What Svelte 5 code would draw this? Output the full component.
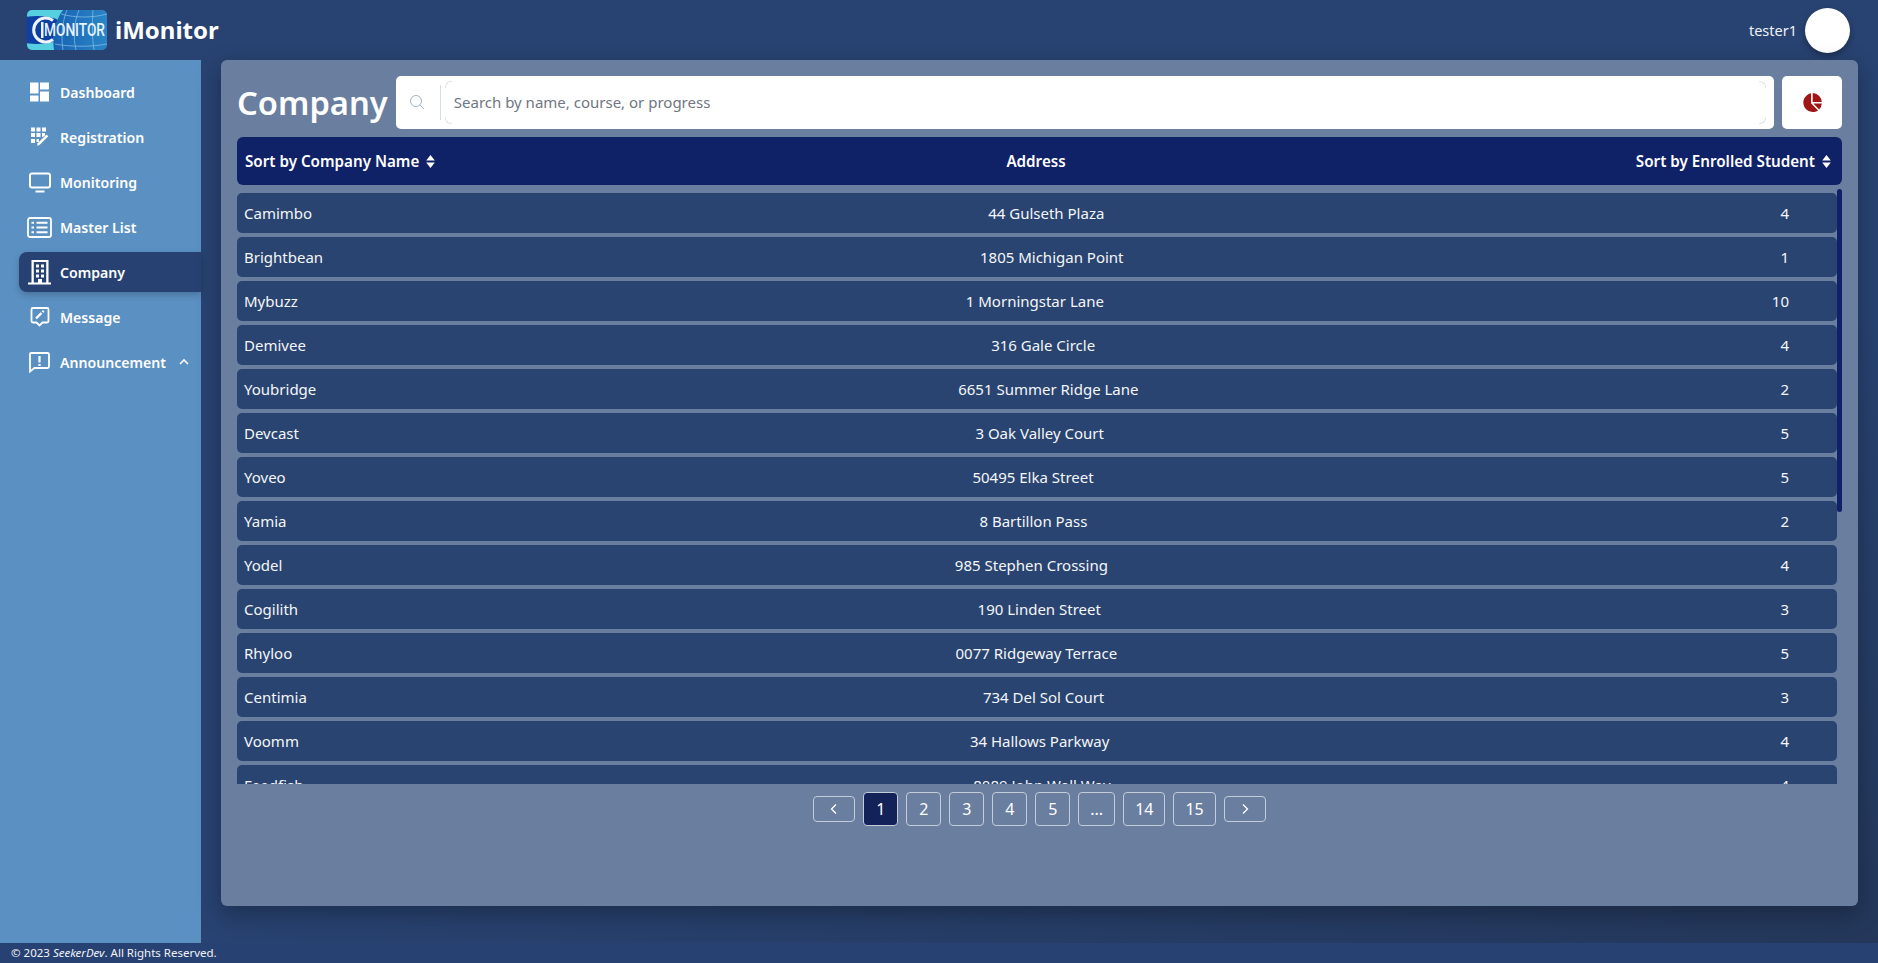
<script>
  const nav = [
    { label: 'Dashboard', icon: 'dashboard' },
    { label: 'Registration', icon: 'registration' },
    { label: 'Monitoring', icon: 'monitor' },
    { label: 'Master List', icon: 'list' },
    { label: 'Company', icon: 'company', active: true },
    { label: 'Message', icon: 'message' },
    { label: 'Announcement', icon: 'announce', caret: true }
  ];

  const companies = [
    ['Camimbo', '44 Gulseth Plaza', 4],
    ['Brightbean', '1805 Michigan Point', 1],
    ['Mybuzz', '1 Morningstar Lane', 10],
    ['Demivee', '316 Gale Circle', 4],
    ['Youbridge', '6651 Summer Ridge Lane', 2],
    ['Devcast', '3 Oak Valley Court', 5],
    ['Yoveo', '50495 Elka Street', 5],
    ['Yamia', '8 Bartillon Pass', 2],
    ['Yodel', '985 Stephen Crossing', 4],
    ['Cogilith', '190 Linden Street', 3],
    ['Rhyloo', '0077 Ridgeway Terrace', 5],
    ['Centimia', '734 Del Sol Court', 3],
    ['Voomm', '34 Hallows Parkway', 4],
    ['Feedfish', '8089 John Wall Way', 4]
  ];

  const pages = ['1', '2', '3', '4', '5', '...', '14', '15'];
</script>

<div class="page">
  <header class="topbar">
    <div class="brand">
      <div class="logo">
        <svg class="globe" viewBox="0 0 80 40" fill="none">
          <defs>
            <linearGradient id="sky" x1="0" y1="0" x2="1" y2="0">
              <stop offset="0" stop-color="#0f4fa6" />
              <stop offset="1" stop-color="#2a86c8" />
            </linearGradient>
            <clipPath id="leftpart">
              <path d="M0 0h36C28 10 25 28 27 40H0z" />
            </clipPath>
          </defs>
          <rect width="80" height="40" fill="url(#sky)" />
          <path d="M0 0h36C28 10 25 28 27 40H0z" fill="#56cfe0" />
          <ellipse cx="10" cy="20" rx="30" ry="14" fill="#0e3fa3" clip-path="url(#leftpart)" />
          <path d="M34 4c14 4 32 4 46 0M28 34c16 3 36 3 52 0M52 0c-5 12-6 28-3 40M66 0c-1 14-1 28 1 40M40 0c-5 12-6 28-4 40" stroke="#8cc3ea" stroke-width=".7" />
          <path d="M26 10.500A12 12 0 1 0 26 29.500" stroke="#eef4fa" stroke-width="3" />
          <rect x="14" y="12" width="2.500" height="16" fill="#eef4fa" />
        </svg>
        <span class="logo-text">MONITOR</span>
      </div>
      <span class="brand-name">iMonitor</span>
    </div>
    <div class="user">
      <span>tester1</span>
      <div class="avatar"></div>
    </div>
  </header>

  <div class="middle">
    <aside class="sidebar">
      {#each nav as item}
        <div class="nav-item" class:active={item.active}>
          <svg class="nav-icon" viewBox="0 0 24 24" fill="currentColor">
            {#if item.icon === 'dashboard'}
              <path d="M2 2.500h8.500v11H2zM12 2.500h9v7h-9zM12 11.500h9v10h-9zM2 15.500h8.500v6H2z" />
            {:else if item.icon === 'registration'}
              <path d="M3 2.500h4v4H3zM8.500 2.500h4v4h-4zM14 2.500h4v4h-4zM3 8h4v4H3zM8.500 8h4v4h-4zM14 8h3v2.500L14.500 12H14zM3 14h4v4H3zM8.500 14h2.500v3H8.500z" />
              <path d="M18.500 9.500l1.800 1.800-8.800 8.700-2.500.7.700-2.500z" />
            {:else if item.icon === 'monitor'}
              <g fill="none" stroke="currentColor" stroke-width="2">
                <rect x="2" y="3.500" width="20" height="14" rx="2" />
                <path d="M7.500 21.500h9" />
              </g>
            {:else if item.icon === 'list'}
              <g fill="none" stroke="currentColor">
                <rect x="0" y="3" width="23" height="19" rx="2" stroke-width="1.800" />
                <path d="M8.500 7.800h11M8.500 12.500h11M8.500 17.200h11" stroke-width="2" />
                <path d="M3.500 7.800h2.500M3.500 12.500h2.500M3.500 17.200h2.500" stroke-width="2" />
              </g>
            {:else if item.icon === 'company'}
              <path fill-rule="evenodd" d="M3.500 0h17v22.500H23v2H0v-2h3.500zM5.800 2v20.500h4.200v-3.500h4v3.500h4.200V2zM8 4.500h3v3H8zM13 4.500h3v3h-3zM8 9.500h3v3H8zM13 9.500h3v3h-3zM8 14.500h3v3H8zM13 14.500h3v3h-3z" />
            {:else if item.icon === 'message'}
              <g fill="none" stroke="currentColor" stroke-width="1.800">
                <path d="M5 3h14a1.500 1.500 0 0 1 1.500 1.500v11.500a1.500 1.500 0 0 1-1.500 1.500h-4.500l-3 3-3-3H5A1.500 1.500 0 0 1 3.500 16V4.500A1.500 1.500 0 0 1 5 3z" />
                <path d="M8 13.500l5.500-5.500" stroke-width="2.400" />
                <path d="M14.500 7l1.200-1.200" stroke-width="2.400" />
              </g>
            {:else}
              <g fill="none" stroke="currentColor" stroke-width="1.800">
                <path d="M3 3h16.500a1.500 1.500 0 0 1 1.500 1.500v12a1.500 1.500 0 0 1-1.500 1.500H6.500L2 21.500V4a1 1 0 0 1 1-1z" />
                <path d="M11.500 6v6.500M11.500 14v2" stroke-width="2.200" />
              </g>
            {/if}
          </svg>
          <span>{item.label}</span>
          {#if item.caret}
            <svg class="caret" viewBox="0 0 12 12" fill="none" stroke="currentColor" stroke-width="1.600">
              <path d="M2 8l4-4 4 4" />
            </svg>
          {/if}
        </div>
      {/each}
    </aside>

    <main class="content">
      <section class="card">
        <div class="toolbar">
          <h1>Company</h1>
          <div class="search">
            <svg class="search-icon" viewBox="0 0 16 16" fill="none" stroke="currentColor" stroke-width="1">
              <circle cx="7" cy="7" r="5.500" />
              <path d="M11 11l4 4" />
            </svg>
            <span class="divider"></span>
            <div class="search-input">
              <span class="corner tl"></span>
              <span class="corner bl"></span>
              <span class="corner tr"></span>
              <span class="corner br"></span>
              Search by name, course, or progress
            </div>
          </div>
          <button class="chart-btn" aria-label="Chart">
            <svg viewBox="0 0 20 20" fill="#a01616">
              <path d="M8.600 1.200v9.600l6.700 6.700A9 9 0 1 1 8.600 1.200z" />
              <path d="M10.200 1a9 9 0 0 1 8.600 8.600h-8.600z" />
              <path d="M10.800 11h8.100a9 9 0 0 1-2.600 5.700z" />
            </svg>
          </button>
        </div>

        <div class="table-head">
          <div class="sort">Sort by Company Name <svg viewBox="0 0 10 14" fill="currentColor"><path d="M5 1l4 5H1zM5 13L1 8h8z" /></svg></div>
          <div>Address</div>
          <div class="sort">Sort by Enrolled Student <svg viewBox="0 0 10 14" fill="currentColor"><path d="M5 1l4 5H1zM5 13L1 8h8z" /></svg></div>
        </div>

        <div class="table-body">
          <div class="rows">
            {#each companies as c}
              <div class="row">
                <span>{c[0]}</span>
                <span>{c[1]}</span>
                <span>{c[2]}</span>
              </div>
            {/each}
          </div>
          <div class="scroll-thumb"></div>
        </div>

        <nav class="pager">
          <button class="small" aria-label="Previous">
            <svg viewBox="0 0 12 12" fill="none" stroke="currentColor" stroke-width="1.300"><path d="M8 1.500L3.500 6 8 10.500" /></svg>
          </button>
          {#each pages as p, i}
            <button class:current={i === 0}>{p}</button>
          {/each}
          <button class="small" aria-label="Next">
            <svg viewBox="0 0 12 12" fill="none" stroke="currentColor" stroke-width="1.300"><path d="M4 1.500L8.500 6 4 10.500" /></svg>
          </button>
        </nav>
      </section>
    </main>
  </div>

  <footer class="footer">© 2023 <em>SeekerDev</em>. All Rights Reserved.</footer>
</div>

<style>
  :global(body) {
    margin: 0;
    font-family: "Noto Sans", "Open Sans", sans-serif;
  }

  .page {
    height: 963px;
    width: 1878px;
    display: flex;
    flex-direction: column;
    overflow: hidden;
    color: #fff;
    background: linear-gradient(160deg, #284372 0%, #284372 60%, #24375a 100%);
  }

  .topbar {
    height: 60px;
    flex: none;
    display: flex;
    align-items: center;
    justify-content: space-between;
    padding: 0 28px 0 27px;
  }

  .brand {
    display: flex;
    align-items: center;
    gap: 8px;
  }

  .logo {
    position: relative;
    width: 80px;
    height: 40px;
    border-radius: 5px;
    overflow: hidden;
  }

  .globe {
    display: block;
    width: 80px;
    height: 40px;
  }

  .logo-text {
    position: absolute;
    left: 17px;
    top: 10px;
    font-family: "Roboto", sans-serif;
    font-size: 19px;
    line-height: 20px;
    font-weight: 500;
    transform: scaleX(0.72);
    transform-origin: left center;
    white-space: nowrap;
    color: #e8f3fb;
  }

  .brand-name {
    font-size: 24px;
    font-weight: 700;
    padding-bottom: 2px;
  }

  .user {
    display: flex;
    align-items: center;
    gap: 8px;
    font-size: 14.5px;
    color: #eef1f6;
  }

  .avatar {
    width: 45px;
    height: 45px;
    border-radius: 50%;
    background: #fff;
    box-shadow: 0 3px 6px rgba(0, 0, 0, 0.35);
  }

  .middle {
    flex: 1;
    display: flex;
    min-height: 0;
  }

  .sidebar {
    width: 201px;
    flex: none;
    box-sizing: border-box;
    background: #5b90c2;
    padding: 12px 0 0 19px;
    display: flex;
    flex-direction: column;
    gap: 5px;
  }

  .nav-item {
    height: 40px;
    display: flex;
    align-items: center;
    padding-left: 9px;
    font-size: 14.1px;
    font-weight: 600;
    color: #fff;
    border-radius: 8px 0 0 8px;
  }

  .nav-item.active {
    background: #274272;
    box-shadow: 0 3px 6px rgba(0, 0, 0, 0.2);
  }

  .nav-icon {
    width: 24px;
    height: 24px;
    margin-right: 8px;
    flex: none;
    overflow: visible;
  }

  .caret {
    width: 12px;
    height: 12px;
    margin-left: 12px;
  }

  .content {
    flex: 1;
    min-width: 0;
    padding: 0 20px 37px 20px;
    display: flex;
  }

  .card {
    flex: 1;
    box-sizing: border-box;
    background: #6a7e9f;
    border-radius: 6px;
    padding: 16px;
    box-shadow: 0 8px 24px rgba(0, 0, 0, 0.3);
    display: flex;
    flex-direction: column;
  }

  .toolbar {
    display: flex;
    align-items: center;
    gap: 8px;
    height: 53px;
  }

  h1 {
    margin: 0;
    font-size: 32.7px;
    font-weight: 600;
    line-height: 53px;
    color: #fff;
  }

  .search {
    flex: 1;
    height: 53px;
    background: #fff;
    border-radius: 5px;
    display: flex;
    align-items: center;
    color: #6b7280;
  }

  .search-icon {
    width: 16px;
    height: 16px;
    margin-left: 13px;
    margin-bottom: 2px;
    color: #9fb3cc;
    flex: none;
  }

  .divider {
    width: 1px;
    height: 35px;
    margin-left: 15px;
    background: #d4dde8;
    flex: none;
  }

  .search-input {
    position: relative;
    flex: 1;
    height: 43px;
    margin: 0 8px 0 4px;
    padding: 0 0 2px 9px;
    box-sizing: border-box;
    display: flex;
    align-items: center;
    font-size: 15px;
    color: #6f7684;
  }

  .corner {
    position: absolute;
    width: 6px;
    height: 6px;
    border: 0 solid #dfe3ea;
  }

  .corner.tl {
    left: 0;
    top: 0;
    border-width: 1px 0 0 1px;
    border-top-left-radius: 6px;
  }

  .corner.bl {
    left: 0;
    bottom: 0;
    border-width: 0 0 1px 1px;
    border-bottom-left-radius: 6px;
  }

  .corner.tr {
    right: 0;
    top: 0;
    border-width: 1px 1px 0 0;
    border-top-right-radius: 6px;
  }

  .corner.br {
    right: 0;
    bottom: 0;
    border-width: 0 1px 1px 0;
    border-bottom-right-radius: 6px;
  }

  .chart-btn {
    width: 60px;
    height: 53px;
    flex: none;
    border: 0;
    border-radius: 5px;
    background: #fff;
    padding: 0;
    display: flex;
    align-items: center;
    justify-content: center;
  }

  .chart-btn svg {
    width: 21px;
    height: 21px;
  }

  .table-head {
    margin-top: 8px;
    height: 48px;
    flex: none;
    background: #0f2167;
    border-radius: 6px;
    display: flex;
    align-items: center;
    justify-content: space-between;
    padding: 0 10px 0 8px;
    font-size: 15.2px;
    font-weight: 600;
  }

  .sort {
    display: flex;
    align-items: center;
    gap: 6px;
  }

  .sort svg {
    width: 11px;
    height: 15px;
  }

  .table-body {
    position: relative;
    margin-top: 4px;
    height: 595px;
    overflow: hidden;
    flex: none;
  }

  .rows {
    padding: 4px 5px 0 0;
    display: flex;
    flex-direction: column;
    gap: 4px;
  }

  .row {
    height: 40px;
    flex: none;
    background: #294470;
    border-radius: 5px;
    display: flex;
    align-items: center;
    justify-content: space-between;
    padding: 0 48px 0 7px;
    font-size: 15px;
    color: #f4f6fa;
  }

  .scroll-thumb {
    position: absolute;
    right: 0;
    top: 0;
    width: 5px;
    height: 323px;
    background: #0f2167;
    border-radius: 3px;
  }

  .pager {
    margin-top: 8px;
    display: flex;
    justify-content: center;
    align-items: center;
    gap: 8px;
  }

  .pager button {
    min-width: 35px;
    height: 34px;
    box-sizing: border-box;
    padding: 0 11px;
    border: 1px solid #c3ccd9;
    border-radius: 4px;
    background: transparent;
    color: #fff;
    font-family: inherit;
    font-size: 16px;
    display: flex;
    align-items: center;
    justify-content: center;
  }

  .pager button.current {
    background: #132258;
  }

  .pager button.small {
    width: 42px;
    height: 26px;
  }

  .pager button.small svg {
    width: 12px;
    height: 12px;
    flex: none;
  }

  .footer {
    height: 20px;
    flex: none;
    background: #274272;
    font-size: 11.5px;
    line-height: 20px;
    padding-left: 11px;
    color: #f0f3f8;
  }
</style>
